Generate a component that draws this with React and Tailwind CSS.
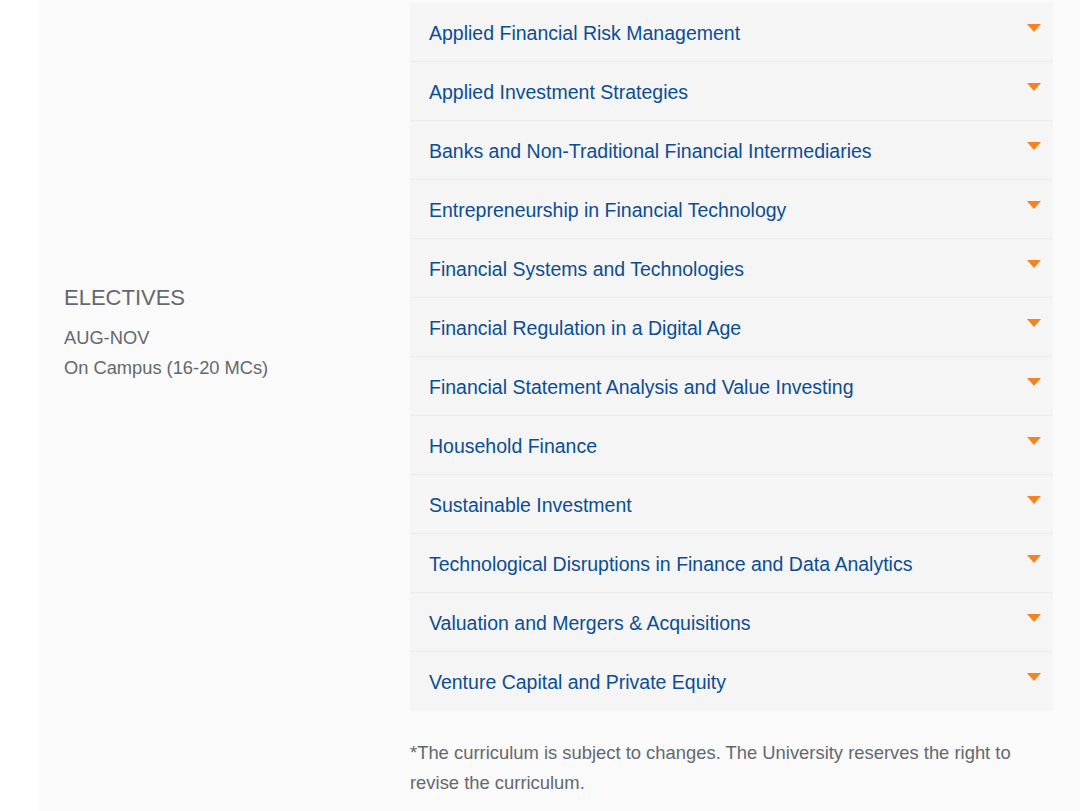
import React from "react";

const electives = [
  "Applied Financial Risk Management",
  "Applied Investment Strategies",
  "Banks and Non-Traditional Financial Intermediaries",
  "Entrepreneurship in Financial Technology",
  "Financial Systems and Technologies",
  "Financial Regulation in a Digital Age",
  "Financial Statement Analysis and Value Investing",
  "Household Finance",
  "Sustainable Investment",
  "Technological Disruptions in Finance and Data Analytics",
  "Valuation and Mergers & Acquisitions",
  "Venture Capital and Private Equity",
];

function Caret() {
  return (
    <svg width="14" height="9" viewBox="0 0 14 9" className="shrink-0">
      <path d="M0 0 H14 L7 8 Z" fill="#f7821e" />
    </svg>
  );
}

function App() {
  return (
    <div className="min-h-screen bg-white font-['Liberation_Sans',Arial,sans-serif]">
      <div className="ml-[39px] bg-[#fafafa] flex h-[811px]">
        {/* left column */}
        <div className="w-[371px] pl-[25px] pt-[283px] text-[#64686e]">
          <div className="text-[22px] leading-[30px]">ELECTIVES</div>
          <div className="mt-[10px] text-[18.3px] leading-[30px]">AUG-NOV</div>
          <div className="text-[18.3px] leading-[30px]">On Campus (16-20 MCs)</div>
        </div>

        {/* accordion */}
        <div className="w-[643px] pt-[3px]">
          <div className="bg-[#f5f5f5]">
            {electives.map((name, i) => (
              <div
                key={name}
                className={
                  "h-[59px] flex items-start justify-between pl-[19px] pr-[12px] " +
                  (i < electives.length - 1 ? "border-b border-[#ebebeb]" : "")
                }
              >
                <span className="pt-[17px] text-[19.5px] leading-[26px] text-[#0c4d93]">{name}</span>
                <span className="pt-[21px]">
                  <Caret />
                </span>
              </div>
            ))}
          </div>
          <p className="mt-[27px] text-[18.4px] leading-[30px] text-[#64686e]">
            *The curriculum is subject to changes. The University reserves the right to revise the curriculum.
          </p>
        </div>
      </div>
    </div>
  );
}

export default App;
